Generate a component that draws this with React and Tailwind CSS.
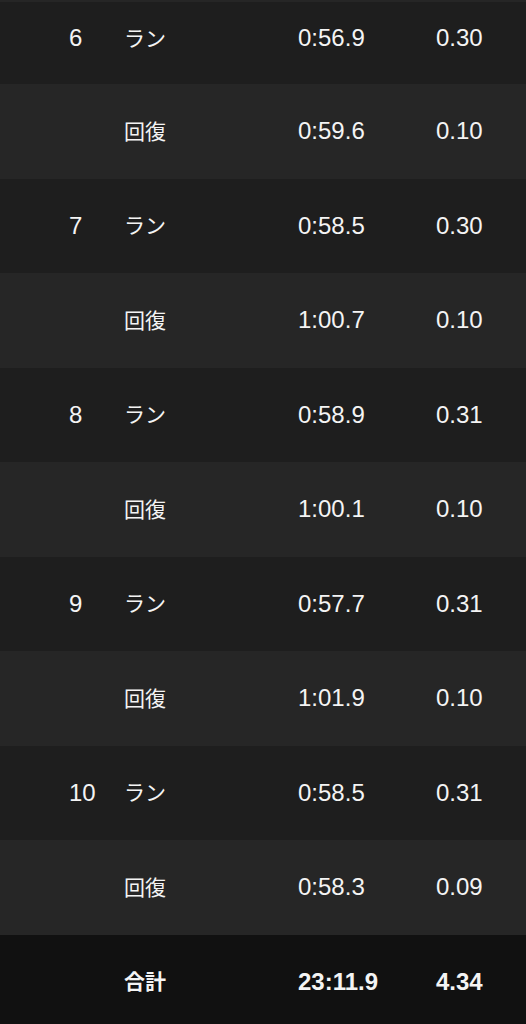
const rows = [
  { no: '6', label: 'ラン', time: '0:56.9', dist: '0.30' },
  { no: '', label: '回復', time: '0:59.6', dist: '0.10' },
  { no: '7', label: 'ラン', time: '0:58.5', dist: '0.30' },
  { no: '', label: '回復', time: '1:00.7', dist: '0.10' },
  { no: '8', label: 'ラン', time: '0:58.9', dist: '0.31' },
  { no: '', label: '回復', time: '1:00.1', dist: '0.10' },
  { no: '9', label: 'ラン', time: '0:57.7', dist: '0.31' },
  { no: '', label: '回復', time: '1:01.9', dist: '0.10' },
  { no: '10', label: 'ラン', time: '0:58.5', dist: '0.31' },
  { no: '', label: '回復', time: '0:58.3', dist: '0.09' },
];

const font = { fontFamily: '"Liberation Sans", "Noto Sans CJK JP", sans-serif' };

function Row({ row, first, total }) {
  const bg = total ? 'bg-[#111111]' : row.no ? 'bg-[#1e1e1e]' : 'bg-[#262626]';
  const h = first ? 'h-[82.5px] pb-[9px]' : 'h-[94.5px]';
  return (
    <div
      className={`grid grid-cols-[55px_174px_138px_1fr] items-center pl-[69px] text-[24px] text-[#f4f4f4] ${bg} ${h} ${total ? 'font-bold' : ''}`}
    >
      <span>{row.no}</span>
      <span className="text-[21px]">{row.label}</span>
      <span>{row.time}</span>
      <span>{row.dist}</span>
    </div>
  );
}

export default function App() {
  return (
    <div className="h-screen overflow-hidden bg-[#111111]" style={font}>
      <div className="h-[1.5px] bg-[#262626]" />
      {rows.map((row, i) => (
        <Row key={i} row={row} first={i === 0} />
      ))}
      <Row row={{ no: '', label: '合計', time: '23:11.9', dist: '4.34' }} total />
    </div>
  );
}
